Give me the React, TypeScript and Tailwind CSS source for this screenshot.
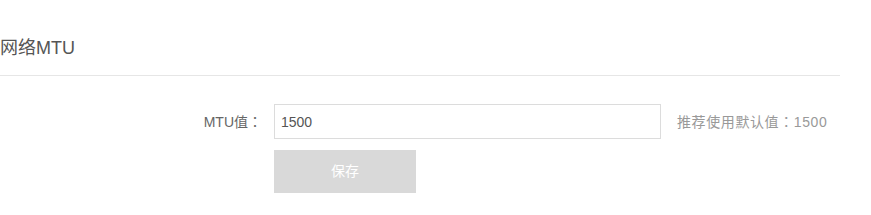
import React from "react";

export default function App() {
  const font = { fontFamily: '"Liberation Sans", "Noto Sans CJK SC", sans-serif' };
  const tc = { fontFamily: '"Noto Sans CJK TC", sans-serif' };
  return (
    <div className="w-[871px] h-[215px] bg-white" style={font}>
      <div className="w-[840px] h-[76px] border-b border-[#e6e6e6] pt-[36px]">
        <div className="text-[18px] leading-[24px] text-[#555]">网络MTU</div>
      </div>
      <div className="mt-[28px] flex items-center">
        <div className="w-[262px] text-right text-[14px] text-[#666]">
          MTU值<span style={tc}>：</span>
        </div>
        <input
          className="ml-[12px] w-[387px] h-[35px] border border-[#dcdcdc] px-[6px] text-[14px] text-[#555] outline-none"
          defaultValue="1500"
        />
        <div className="ml-[16px] text-[14px] tracking-[0.6px] text-[#999]">
          推荐使用默认值<span style={tc}>：</span>1500
        </div>
      </div>
      <button className="mt-[11px] ml-[274px] w-[142px] h-[43px] bg-[#d9d9d9] text-white text-[14px]">
        保存
      </button>
    </div>
  );
}
